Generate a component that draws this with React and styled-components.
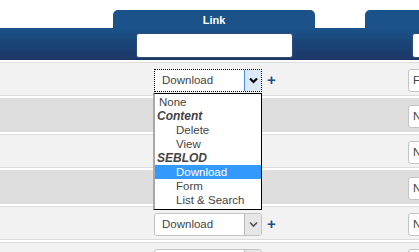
import React from 'react';
import styled, { createGlobalStyle } from 'styled-components';

const GlobalStyle = createGlobalStyle`
  body {
    margin: 0;
    background: #ffffff;
    font-family: "Liberation Sans", Arial, sans-serif;
    overflow: hidden;
  }
`;

const COLS = '113px 202px 50px 260px';

const Page = styled.div`
  width: 419px;
  height: 252px;
  overflow: hidden;
  padding-top: 10px;
  box-sizing: border-box;
`;

const TabRow = styled.div`
  display: grid;
  grid-template-columns: ${COLS};
  height: 18px;
`;

const Tab = styled.div`
  grid-column: ${(p) => p.$col};
  background: #1a5289;
  border-radius: 5px 5px 0 0;
  color: #ffffff;
  font-size: 11px;
  font-weight: bold;
  display: flex;
  justify-content: center;
  align-items: center;
  padding-top: 2px;
  box-sizing: border-box;
`;

const Bar = styled.div`
  display: grid;
  grid-template-columns: ${COLS};
  height: 32px;
  background: linear-gradient(#1a5289, #1c3765);
`;

const Cell = styled.div`
  grid-column: ${(p) => p.$col};
  display: flex;
  align-items: center;
  justify-content: ${(p) => (p.$start ? 'flex-start' : 'center')};
  padding-left: ${(p) => p.$pad || 0}px;
  position: relative;
`;

const FilterInput = styled.div`
  width: 157px;
  height: 25px;
  margin-top: 3px;
  background: #ffffff;
  border: 1px solid #2b4f7a;
  border-radius: 3px;
  box-sizing: border-box;
`;

const Rows = styled.div`
  display: flex;
  flex-direction: column;
`;

const Row = styled.div`
  display: grid;
  grid-template-columns: ${COLS};
  height: 34px;
  margin-top: 2px;
  box-sizing: border-box;
  background: ${(p) => (p.$dark ? '#dedede' : '#f2f2f2')};
  border-top: 1px solid ${(p) => (p.$dark ? '#dedede' : '#dcdcdc')};
  border-bottom: 1px solid ${(p) => (p.$dark ? '#dedede' : '#dcdcdc')};
`;

const Select = styled.div`
  display: flex;
  width: 108px;
  height: 23px;
  box-sizing: border-box;
  background: #ffffff;
  border: 1px ${(p) => (p.$focus ? 'dotted #000000' : 'solid #c4c4c4')};
  border-radius: ${(p) => (p.$focus ? '0' : '3px')};
  margin-top: 2px;
`;

const SelectText = styled.span`
  flex: 1;
  font-size: 11.5px;
  color: #444444;
  padding-left: 7px;
  line-height: 21px;
  white-space: nowrap;
  overflow: hidden;
`;

const Arrow = styled.span`
  width: 17px;
  display: flex;
  align-items: center;
  justify-content: center;
  box-sizing: border-box;
  background: ${(p) => (p.$focus ? '#dce9f8' : '#e6e6e6')};
  border-left: 1px solid ${(p) => (p.$focus ? '#4a90e2' : '#b8b8b8')};
  border-radius: ${(p) => (p.$focus ? '0' : '0 2px 2px 0')};
`;

const Plus = styled.span`
  color: #1a4f8c;
  font-size: 15px;
  font-weight: bold;
  margin-left: 5px;
  margin-top: 1px;
`;

const MiniSelect = styled.div`
  width: 40px;
  height: 23px;
  margin-top: 2px;
  box-sizing: border-box;
  background: #ffffff;
  border: 1px solid #c4c4c4;
  border-radius: 3px;
  font-size: 11.5px;
  color: #444444;
  line-height: 21px;
  padding-left: 4px;
`;

const List = styled.div`
  position: absolute;
  top: 30px;
  left: 40px;
  width: 109px;
  background: #ffffff;
  border: 1px solid #000000;
  border-left: 2px solid #a9a9a9;
  box-sizing: border-box;
  padding: 1px 0 2px;
  z-index: 2;
`;

const Item = styled.div`
  line-height: 14px;
  height: 14px;
  color: ${(p) => (p.$active ? '#ffffff' : '#444444')};
  background: ${(p) => (p.$active ? '#3399ff' : 'transparent')};
  padding-left: ${(p) => p.$indent}px;
  font-weight: ${(p) => (p.$group ? 'bold' : 'normal')};
  font-style: ${(p) => (p.$group ? 'italic' : 'normal')};
  font-size: ${(p) => (p.$group ? '12px' : '11.5px')};
  white-space: nowrap;
`;

const Chevron = ({ bold }) => (
  <svg width="9" height="7" viewBox="0 0 9 7">
    <path
      d="M1 1.5 L4.5 5 L8 1.5"
      fill="none"
      stroke={bold ? '#000000' : '#555555'}
      strokeWidth={bold ? 2.2 : 1.6}
    />
  </svg>
);

const LinkSelect = ({ focus }) => (
  <>
    <Select $focus={focus}>
      <SelectText>Download</SelectText>
      <Arrow $focus={focus}>
        <Chevron bold={focus} />
      </Arrow>
    </Select>
    <Plus>+</Plus>
  </>
);

const options = [
  { label: 'None', indent: 4 },
  { label: 'Content', indent: 2, group: true },
  { label: 'Delete', indent: 21 },
  { label: 'View', indent: 21 },
  { label: 'SEBLOD', indent: 2, group: true },
  { label: 'Download', indent: 21, active: true },
  { label: 'Form', indent: 21 },
  { label: 'List & Search', indent: 21 },
];

const rows = [
  { link: 'focus', right: 'F' },
  { dark: true, right: 'N' },
  { right: 'N' },
  { dark: true, right: 'N' },
  { link: 'plain', right: 'N' },
  { link: 'plain', right: 'N' },
];

const App = () => {
  return (
    <Page>
      <GlobalStyle />
      <TabRow>
        <Tab $col={2}>Link</Tab>
        <Tab $col={4} />
      </TabRow>
      <Bar>
        <Cell $col={2}>
          <FilterInput />
        </Cell>
        <Cell $col={4} $start $pad={47}>
          <FilterInput />
        </Cell>
      </Bar>
      <Rows>
        {rows.map((r, i) => (
          <Row key={i} $dark={r.dark}>
            <Cell $col={2} $start $pad={41}>
              {r.link && <LinkSelect focus={r.link === 'focus'} />}
              {r.link === 'focus' && (
                <List>
                  {options.map((o) => (
                    <Item key={o.label} $indent={o.indent} $group={o.group} $active={o.active}>
                      {o.label}
                    </Item>
                  ))}
                </List>
              )}
            </Cell>
            <Cell $col={4} $start $pad={43}>
              <MiniSelect>{r.right}</MiniSelect>
            </Cell>
          </Row>
        ))}
      </Rows>
    </Page>
  );
};

export default App;
